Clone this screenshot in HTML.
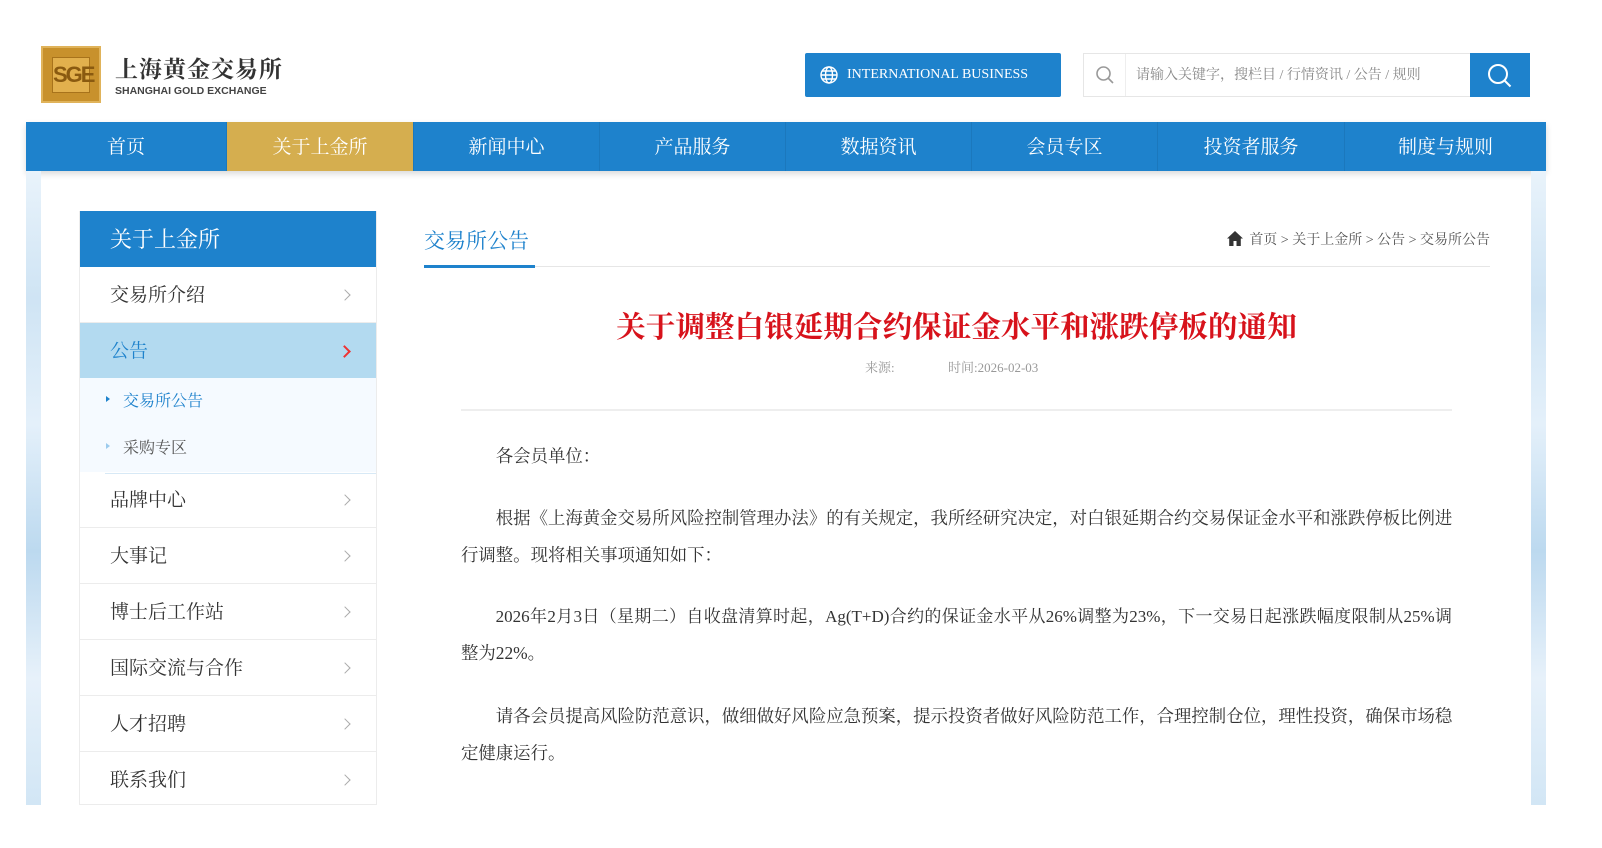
<!DOCTYPE html>
<html><head><meta charset="utf-8"><style>
*{margin:0;padding:0;box-sizing:border-box}
body{width:1602px;height:848px;background:#fff;position:relative;overflow:hidden;font-family:"Liberation Serif","Noto Serif CJK SC",serif;color:#333}
.abs{position:absolute}
.nav{left:26px;top:122px;width:1520px;height:49px;background:#1e82cc;display:flex;box-shadow:0 3px 6px rgba(0,0,0,.15)}
.nav div{height:49px;line-height:51px;text-align:center;color:#fff;font-size:19px;border-right:1px solid #1b78bd}
.nav .on{background:#d5ae4f}
.strip{top:171px;width:15px;height:634px;background:linear-gradient(180deg,#e9f3fb 0%,#cfe4f4 20%,#e4f0fa 40%,#bcd9ef 60%,#e7f1fa 80%,#d2e6f5 100%)}
.side{left:79px;top:211px;width:298px;border:1px solid #ececec;border-top:none;height:594px;overflow:hidden}
.side .h{height:56px;background:#1e82cc;color:#fff;font-size:22px;line-height:58px;padding-left:30px}
.side .i{height:56px;line-height:57px;border-bottom:1px solid #ececec;font-size:19px;padding-left:30px;position:relative;color:#333}
.side .i:after{content:"";position:absolute;right:27px;top:24px;width:7px;height:7px;border-top:1.5px solid #aaa;border-right:1.5px solid #aaa;transform:rotate(45deg)}
.side .i.on{background:#b3daf0;color:#1e82cc;border-bottom:none;height:55px}
.side .i.on:after{border-color:#e33;border-width:2px}
.side .s{height:47px;line-height:48px;background:#f5faff;font-size:16px;padding-left:43px;position:relative;color:#555}
.side .s span{display:block;border-bottom:1px solid #d7e9f6;margin-left:-18px;padding-left:18px}
.side .s:before{content:"";position:absolute;left:26px;top:18px;border-left:4px solid #1e82cc;border-top:3px solid transparent;border-bottom:3px solid transparent}
.side .s.lt:before{border-left-color:#9ccbed}
.p{position:absolute;left:461px;width:991px;font-size:17.4px;color:#333}
.p div{height:37px;line-height:37px;text-align:justify;text-align-last:justify;white-space:nowrap}
.p div.l{text-align-last:left}
</style></head><body>
<div class="abs" style="left:41px;top:46px;width:60px;height:57px;background:#c8912c;border:2px solid #e0b35a">
 <div style="position:absolute;left:9px;top:9px;width:38px;height:36px;background:#e2b04d;border:1px solid #a8731b;color:#8a5a10;font:bold 22px/34px 'Liberation Sans',sans-serif;text-align:center;letter-spacing:-2px">SGE</div>
</div>
<div class="abs" style="left:115px;top:54px;font-size:23px;font-weight:bold;color:#333;letter-spacing:1px;font-family:'Noto Serif CJK SC',serif;line-height:28px">上海黄金交易所</div>
<div class="abs" style="left:115px;top:85px;font:bold 10.5px 'Liberation Sans',sans-serif;color:#444">SHANGHAI GOLD EXCHANGE</div>
<div class="abs" style="left:805px;top:53px;width:256px;height:44px;background:#1e82cc;border-radius:2px;color:#fff;font-size:14px;line-height:44px;padding-left:42px">INTERNATIONAL BUSINESS
 <svg style="position:absolute;left:14px;top:12px" width="20" height="20" viewBox="0 0 20 20" fill="none" stroke="#fff" stroke-width="1.4"><circle cx="10" cy="10" r="8"/><ellipse cx="10" cy="10" rx="3.5" ry="8"/><path d="M2 10h16M3.5 6h13M3.5 14h13"/></svg></div>
<div class="abs" style="left:1083px;top:53px;width:447px;height:44px;border:1px solid #e6e6e6;background:#fff">
 <div style="position:absolute;left:0;top:0;width:42px;height:42px;border-right:1px solid #eee"><svg style="position:absolute;left:11px;top:11px" width="20" height="20" viewBox="0 0 20 20" fill="none" stroke="#999" stroke-width="1.6"><circle cx="8.5" cy="8.5" r="6.5"/><path d="M13 13l5 5"/></svg></div>
 <div style="position:absolute;left:52px;top:0;line-height:44px;font-size:14px;color:#888">请输入关键字，搜栏目 / 行情资讯 / 公告 / 规则</div>
 <div style="position:absolute;right:-1px;top:-1px;width:60px;height:44px;background:#1e82cc"><svg style="position:absolute;left:16px;top:9px" width="28" height="28" viewBox="0 0 28 28" fill="none" stroke="#fff" stroke-width="2"><circle cx="12" cy="12" r="9"/><path d="M18.5 18.5l6 6"/></svg></div>
</div>
<div class="abs nav">
 <div style="width:201px">首页</div><div class="on" style="width:187px">关于上金所</div><div style="width:186px">新闻中心</div><div style="width:186px">产品服务</div><div style="width:186px">数据资讯</div><div style="width:186px">会员专区</div><div style="width:187px">投资者服务</div><div style="width:201px;border:none">制度与规则</div>
</div>
<div class="abs strip" style="left:26px"></div>
<div class="abs strip" style="left:1531px"></div>
<div class="abs side">
 <div class="h">关于上金所</div>
 <div class="i">交易所介绍</div>
 <div class="i on">公告</div>
 <div class="s"><span style="color:#1e82cc">交易所公告</span></div>
 <div class="s lt"><span>采购专区</span></div>
 <div class="i">品牌中心</div>
 <div class="i">大事记</div>
 <div class="i">博士后工作站</div>
 <div class="i">国际交流与合作</div>
 <div class="i">人才招聘</div>
 <div class="i">联系我们</div>
</div>
<div class="abs" style="left:424px;top:226px;font-size:21px;color:#1e82cc;line-height:30px">交易所公告</div>
<div class="abs" style="left:424px;top:266px;width:1066px;height:1px;background:#e6e6e6"></div>
<div class="abs" style="left:424px;top:265px;width:111px;height:3px;background:#1e82cc"></div>
<div class="abs" style="right:112px;top:231px;font-size:14px;color:#555;line-height:20px">
 <svg style="vertical-align:-2px;margin-right:6px" width="16" height="15" viewBox="0 0 16 15"><path d="M8 0L0 7.5h2.2V15h4.3v-5h3v5h4.3V7.5H16z" fill="#333"/></svg>首页 &gt; 关于上金所 &gt; 公告 &gt; 交易所公告</div>
<div class="abs" style="left:461px;width:991px;top:305px;text-align:center;font-size:29.6px;font-weight:bold;color:#d7121b;line-height:40px;font-family:'Noto Serif CJK SC',serif">关于调整白银延期合约保证金水平和涨跌停板的通知</div>
<div class="abs" style="left:865px;top:358px;font-size:13px;color:#999;line-height:20px">来源:</div>
<div class="abs" style="left:948px;top:358px;font-size:13px;color:#999;line-height:20px">时间:2026-02-03</div>
<div class="abs" style="left:461px;top:409px;width:991px;height:2px;background:#eee"></div>
<div class="p" style="top:438px"><div class="l">　　各会员单位：</div></div>
<div class="p" style="top:500px"><div>　　根据《上海黄金交易所风险控制管理办法》的有关规定，我所经研究决定，对白银延期合约交易保证金水平和涨跌停板比例进</div><div class="l">行调整。现将相关事项通知如下：</div></div>
<div class="p" style="top:598px"><div style="font-size:17px">　　2026年2月3日（星期二）自收盘清算时起，Ag(T+D)合约的保证金水平从26%调整为23%，下一交易日起涨跌幅度限制从25%调</div><div class="l">整为22%。</div></div>
<div class="p" style="top:698px"><div>　　请各会员提高风险防范意识，做细做好风险应急预案，提示投资者做好风险防范工作，合理控制仓位，理性投资，确保市场稳</div><div class="l">定健康运行。</div></div>
</body></html>
